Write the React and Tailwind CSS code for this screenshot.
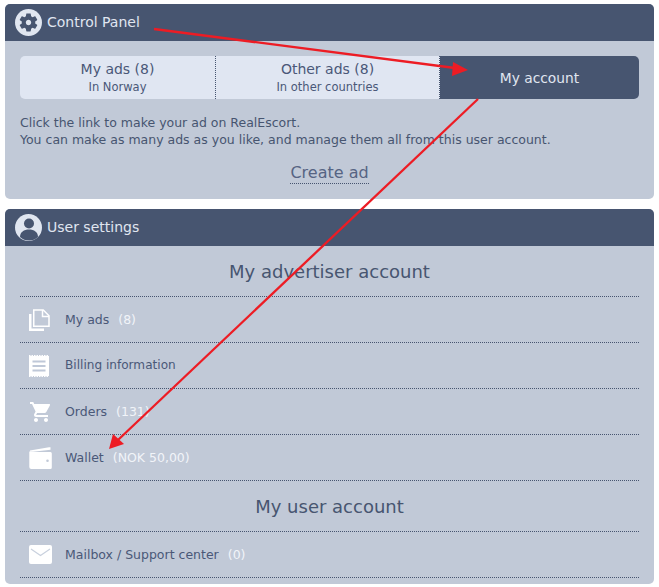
const Gear = () => (
  <svg viewBox="0 0 27 27" className="w-[27px] h-[27px] shrink-0">
    <circle cx="13.5" cy="13.5" r="13.5" fill="#e0e6f0" />
    <g transform="translate(2.7 2.7) scale(0.9)">
      <path
        fill="#475570"
        fillRule="evenodd"
        d="M19.43 12.98c.04-.32.07-.64.07-.98s-.03-.66-.07-.98l2.11-1.65c.19-.15.24-.42.12-.64l-2-3.46c-.12-.22-.39-.3-.61-.22l-2.49 1c-.52-.4-1.08-.73-1.69-.98l-.38-2.65C14.46 2.18 14.25 2 14 2h-4c-.25 0-.46.18-.49.42l-.38 2.65c-.61.25-1.17.59-1.69.98l-2.49-1c-.23-.09-.49 0-.61.22l-2 3.46c-.13.22-.07.49.12.64l2.11 1.65c-.04.32-.07.65-.07.98s.03.66.07.98l-2.11 1.65c-.19.15-.24.42-.12.64l2 3.46c.12.22.39.3.61.22l2.49-1c.52.4 1.08.73 1.69.98l.38 2.65c.03.24.24.42.49.42h4c.25 0 .46-.18.49-.42l.38-2.65c.61-.25 1.17-.59 1.69-.98l2.49 1c.23.09.49 0 .61-.22l2-3.46c.12-.22.07-.49-.12-.64l-2.11-1.65zM12 15c-1.66 0-3-1.34-3-3s1.34-3 3-3 3 1.34 3 3-1.34 3-3 3z"
      />
    </g>
  </svg>
);

const UserIcon = () => (
  <svg viewBox="0 0 27 27" className="w-[27px] h-[27px] shrink-0">
    <circle cx="13.5" cy="13.5" r="13.5" fill="#e0e6f0" />
    <circle cx="14" cy="9.5" r="5" fill="#475570" />
    <path fill="#475570" d="M5 23c0-5 4-7.5 9-7.5s9 2.5 9 7.5c-2.5 2.500-5.500 3.500-9 3.500s-6.500-1-9-3.500z" />
  </svg>
);

const CopyIcon = () => (
  <svg viewBox="0 0 21 22" className="w-[21px] h-[22px]" fill="none" stroke="#fff">
    <path strokeWidth="1.5" d="M4.750 1h9.500l5.750 5.750V17.250H4.750z" />
    <path strokeWidth="1.5" d="M13.500 1v6.500H20" />
    <path strokeWidth="2.500" d="M1.250 5v15.750H15" />
  </svg>
);

const BillIcon = () => (
  <svg viewBox="0 0 20 22" className="w-[20px] h-[22px]">
    <rect y="1" width="20" height="20" fill="#fff" />
    <path d="M0 .5h20M0 21.500h20" stroke="#fff" strokeDasharray="1.500 1" />
    <path d="M3.500 6.500h13M3.500 11h13M3.500 15.500h13" stroke="#bfc8d8" strokeWidth="2" />
  </svg>
);

const CartIcon = () => (
  <svg viewBox="0 0 24 24" className="w-[24px] h-[24px]" fill="#fff">
    <path d="M7 18c-1.100 0-1.990.9-1.990 2S5.900 22 7 22s2-.9 2-2-.9-2-2-2zM1 2v2h2l3.600 7.590-1.350 2.450c-.16.28-.25.61-.25.960 0 1.100.9 2 2 2h12v-2H7.420c-.14 0-.25-.11-.25-.25l.03-.12.9-1.630h7.450c.75 0 1.410-.41 1.750-1.030l3.580-6.490A1 1 0 0 0 20 4H5.210l-.94-2H1zm16 16c-1.100 0-1.990.9-1.990 2s.89 2 1.990 2 2-.9 2-2-.9-2-2-2z" />
  </svg>
);

const WalletIcon = () => (
  <svg viewBox="0 0 23 22" className="w-[23px] h-[22px]" fill="#fff">
    <path d="M1 3.500 20 .300h1.500v2.500L4 4.800H1z" />
    <path fillRule="evenodd" d="M.3 4.500V20a2 2 0 0 0 2 2h19a1.500 1.500 0 0 0 1.500-1.500V6.500A1.500 1.500 0 0 0 21.500 5H4zM18.500 12.500a1.300 1.300 0 1 0 0 2.600 1.300 1.300 0 0 0 0-2.600z" />
  </svg>
);

const MailIcon = () => (
  <svg viewBox="0 0 23 19" className="w-[23px] h-[19px]">
    <rect width="23" height="19" rx="2" fill="#fff" />
    <path d="M2 4l9.500 6.500L21 4" fill="none" stroke="#c9d1de" strokeWidth="1.200" />
  </svg>
);

const Panel = ({ icon, title, children }) => (
  <section className="bg-[#c1c9d7] rounded-[5px] overflow-hidden">
    <header className="h-[37px] bg-[#475570] flex items-center pl-[10px] gap-[5px] text-[#e0e6f0] text-[14px]">
      {icon}
      <span>{title}</span>
    </header>
    {children}
  </section>
);

const Row = ({ icon, label, count, labelClass = 'text-[12.5px]' }) => (
  <div className="h-[46px] border-b border-dotted border-[#475570] flex items-center">
    <div className="w-[45px] pl-[9px] flex items-center">{icon}</div>
    <span className={`text-[#4a5878] ${labelClass}`}>{label}</span>
    {count && <span className="ml-[9px] text-[12.5px] text-[#f1f4f9]">{count}</span>}
  </div>
);

export default function App() {
  return (
    <div className="relative w-[659px] h-[587px] bg-white px-[5px] pt-[4px] font-['DejaVu_Sans',sans-serif] text-[12.5px] leading-[17px] overflow-hidden">
      <Panel icon={<Gear />} title="Control Panel">
        <div className="px-[15px] pt-[15px] h-[158px]">
          <div className="flex h-[43px]">
            <div className="w-[196px] bg-[#e0e6f2] rounded-l-[5px] border-r border-dotted border-[#475570] flex flex-col items-center justify-center text-[#4a5878]">
              <span className="text-[14px] leading-[19px] pt-[1px]">My ads (8)</span>
              <span className="text-[11.5px] leading-[17px]">In Norway</span>
            </div>
            <div className="w-[224px] bg-[#e0e6f2] border-r border-dotted border-[#475570] flex flex-col items-center justify-center text-[#4a5878]">
              <span className="text-[14px] leading-[19px] pt-[1px]">Other ads (8)</span>
              <span className="text-[11.5px] leading-[17px]">In other countries</span>
            </div>
            <div className="flex-1 bg-[#475570] rounded-r-[5px] flex items-center justify-center pt-[2px] text-[#e0e6f0] text-[13.8px]">
              My account
            </div>
          </div>
          <p className="mt-[15px] text-[#475570]">
            Click the link to make your ad on RealEscort.
            <br />
            You can make as many ads as you like, and manage them all from this user account.
          </p>
          <div className="mt-[14px] text-center">
            <span className="text-[16px] leading-[21px] text-[#566483] border-b border-dotted border-[#475570] inline-block">
              Create ad
            </span>
          </div>
        </div>
      </Panel>

      <div className="mt-[10px]">
        <Panel icon={<UserIcon />} title="User settings">
          <div className="px-[15px] pb-[6px]">
            <h2 className="h-[51px] flex items-center justify-center border-b border-dotted border-[#475570] text-[18px] text-[#475570]">
              My advertiser account
            </h2>
            <Row icon={<CopyIcon />} label="My ads" count="(8)" />
            <Row icon={<BillIcon />} label="Billing information" labelClass="text-[12.1px]" />
            <Row icon={<CartIcon />} label="Orders" count="(131)" />
            <Row icon={<WalletIcon />} label="Wallet" count="(NOK 50,00)" />
            <h2 className="h-[51px] flex items-center justify-center border-b border-dotted border-[#475570] text-[18px] text-[#475570]">
              My user account
            </h2>
            <Row icon={<MailIcon />} label="Mailbox / Support center" count="(0)" />
          </div>
        </Panel>
      </div>

      {/* red annotation arrows drawn over the page */}
      <svg className="absolute inset-0 pointer-events-none" width="659" height="587" viewBox="0 0 659 587">
        <path d="M154 29 455 68" stroke="#ed1c24" strokeWidth="2.300" fill="none" />
        <path d="M468 70 453 62 452 76z" fill="#ed1c24" />
        <path d="M478 99 118 440" stroke="#ed1c24" strokeWidth="2.300" fill="none" />
        <path d="M109 449 113 434 124 444z" fill="#ed1c24" />
      </svg>
    </div>
  );
}
